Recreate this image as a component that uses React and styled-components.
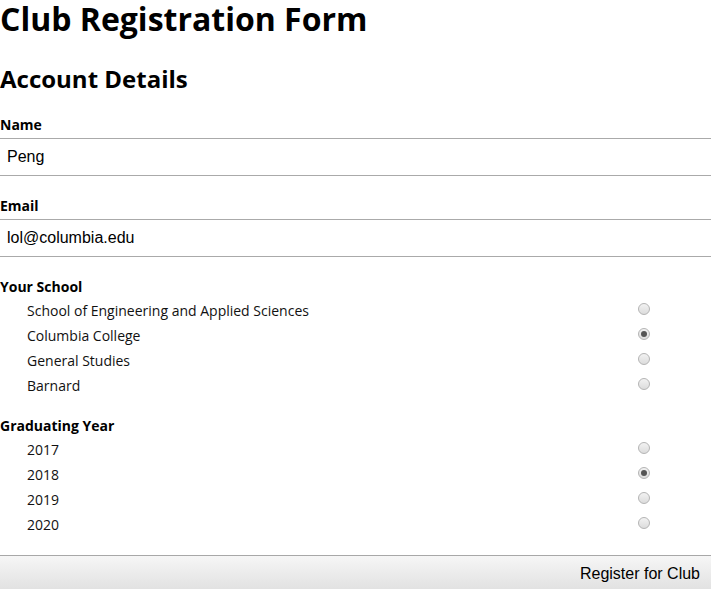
import React, { useState } from 'react';
import styled, { createGlobalStyle } from 'styled-components';

const GlobalStyle = createGlobalStyle`
  html, body {
    margin: 0;
    padding: 0;
    background: #fff;
  }
  body {
    font-family: 'Open Sans', 'Liberation Sans', Arial, sans-serif;
    color: #000;
    overflow: hidden;
  }
`;

const Form = styled.form`
  display: flex;
  flex-direction: column;
  width: 100%;
`;

const Title = styled.h1`
  margin: 0;
  font-size: 32px;
  font-weight: 700;
  line-height: 38px;
`;

const Subtitle = styled.h2`
  margin: 26px 0 21px;
  font-size: 24px;
  font-weight: 700;
  line-height: 30px;
`;

const Group = styled.div`
  display: flex;
  flex-direction: column;
  margin-bottom: ${(p) => p.$after}px;
`;

const Label = styled.label`
  display: block;
  font-size: 14px;
  font-weight: 700;
  line-height: 20px;
  margin-bottom: ${(p) => p.$below || 0}px;
`;

const TextInput = styled.input`
  box-sizing: border-box;
  width: 100%;
  height: 38px;
  margin: 0;
  padding: 0 7px;
  border: none;
  border-top: 1px solid #aaa;
  border-bottom: 1px solid #aaa;
  font-family: 'Liberation Sans', Arial, sans-serif;
  font-size: 16px;
  color: #000;
  outline: none;
  background: #fff;
`;

const OptionList = styled.ul`
  list-style: none;
  margin: 1px 0 0;
  padding: 0;
`;

const Option = styled.li`
  display: flex;
  align-items: center;
  justify-content: space-between;
  height: 25px;
  padding: 0 61px 0 27px;
  font-size: 14px;
  line-height: 25px;
  color: #111;
`;

const Radio = styled.input.attrs({ type: 'radio' })`
  appearance: none;
  -webkit-appearance: none;
  box-sizing: border-box;
  width: 12px;
  height: 12px;
  margin: 0 0 4px;
  border-radius: 50%;
  border: 1px solid #b4b4b4;
  background: linear-gradient(#f2f2f2, #dcdcdc);
  position: relative;
  cursor: pointer;

  &:checked::after {
    content: '';
    position: absolute;
    left: 2px;
    top: 2px;
    width: 6px;
    height: 6px;
    border-radius: 50%;
    background: #555;
  }
`;

const Submit = styled.button`
  margin-top: 18px;
  width: 100%;
  height: 40px;
  padding: 0 11px 4px;
  text-align: right;
  border: none;
  border-top: 1px solid #a8a8a8;
  background: linear-gradient(#f6f6f6, #dedede);
  font-family: 'Liberation Sans', Arial, sans-serif;
  font-size: 16px;
  color: #000;
  cursor: pointer;
`;

const schools = [
  'School of Engineering and Applied Sciences',
  'Columbia College',
  'General Studies',
  'Barnard',
];

const years = ['2017', '2018', '2019', '2020'];

const RadioGroup = ({ name, options, value, onChange }) => (
  <OptionList>
    {options.map((opt) => (
      <Option key={opt}>
        <span>{opt}</span>
        <Radio
          name={name}
          value={opt}
          checked={value === opt}
          onChange={() => onChange(opt)}
        />
      </Option>
    ))}
  </OptionList>
);

export default function App() {
  const [name, setName] = useState('Peng');
  const [email, setEmail] = useState('lol@columbia.edu');
  const [school, setSchool] = useState('Columbia College');
  const [year, setYear] = useState('2018');

  return (
    <>
      <GlobalStyle />
      <Form onSubmit={(e) => e.preventDefault()}>
        <Title>Club Registration Form</Title>
        <Subtitle>Account Details</Subtitle>

        <Group $after={20}>
          <Label $below={3}>Name</Label>
          <TextInput value={name} onChange={(e) => setName(e.target.value)} />
        </Group>

        <Group $after={20}>
          <Label $below={3}>Email</Label>
          <TextInput value={email} onChange={(e) => setEmail(e.target.value)} />
        </Group>

        <Group $after={18}>
          <Label>Your School</Label>
          <RadioGroup name="school" options={schools} value={school} onChange={setSchool} />
        </Group>

        <Group $after={0}>
          <Label>Graduating Year</Label>
          <RadioGroup name="year" options={years} value={year} onChange={setYear} />
        </Group>

        <Submit type="submit">Register for Club</Submit>
      </Form>
    </>
  );
}
